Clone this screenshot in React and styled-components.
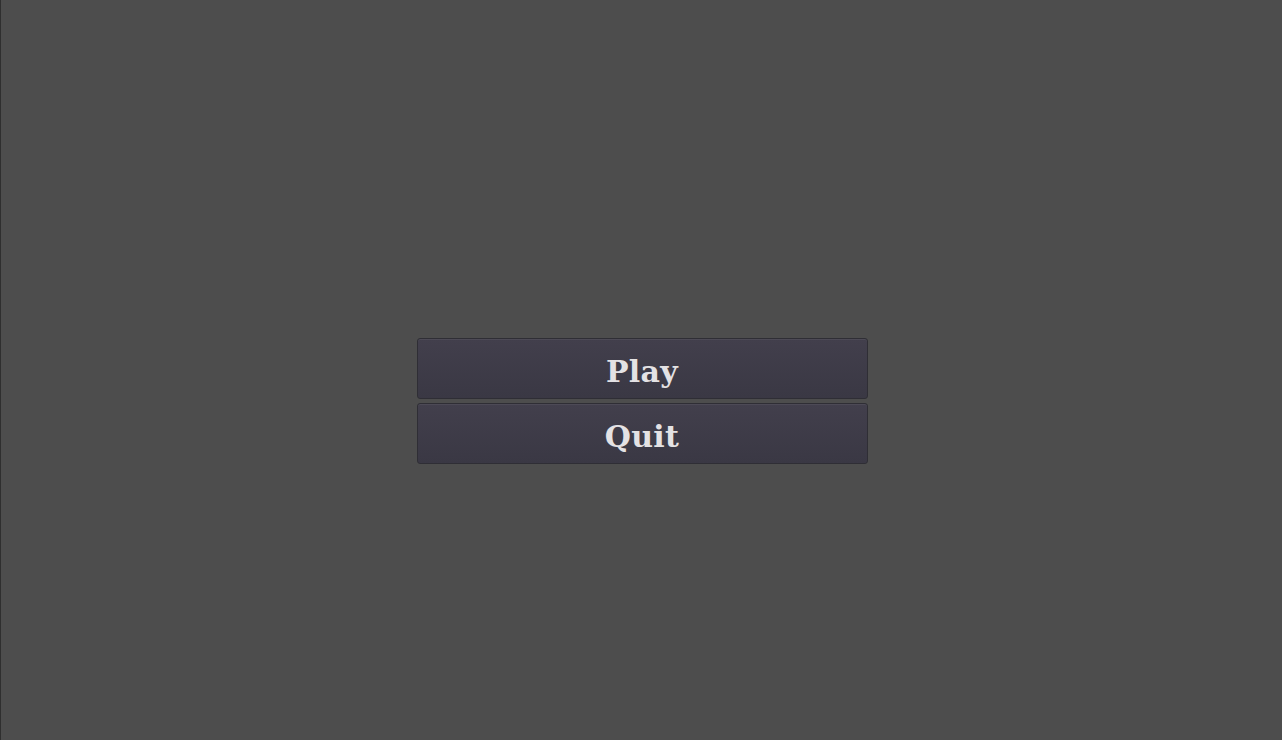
import styled, { createGlobalStyle } from "styled-components";

const GlobalStyle = createGlobalStyle`
  html, body {
    margin: 0;
    padding: 0;
    height: 100%;
    background: #4d4d4d;
  }
  #root {
    height: 100%;
  }
`;

const Screen = styled.div`
  display: flex;
  flex-direction: column;
  align-items: center;
  justify-content: center;
  box-sizing: border-box;
  height: 740px;
  padding-top: 62px;
  background: #4d4d4d;
  border-left: 1px solid #2f2f2f;
`;

const Menu = styled.div`
  display: flex;
  flex-direction: column;
  gap: 4px;
  margin-left: 1px;
`;

const MenuButton = styled.button`
  width: 451px;
  height: 61px;
  box-sizing: border-box;
  border: 1px solid #2f2e35;
  border-radius: 3px;
  background: linear-gradient(#423f4c, #3a3844);
  box-shadow: inset 0 1px 0 rgba(255, 255, 255, 0.06);
  color: #e4e2e4;
  font-family: "DejaVu Serif", "Liberation Serif", serif;
  font-size: 30px;
  font-weight: bold;
  letter-spacing: 0.3px;
  padding: 5px 0 0;
  cursor: pointer;
`;

function App() {
  return (
    <>
      <GlobalStyle />
      <Screen>
        <Menu>
          <MenuButton>Play</MenuButton>
          <MenuButton>Quit</MenuButton>
        </Menu>
      </Screen>
    </>
  );
}

export default App;
